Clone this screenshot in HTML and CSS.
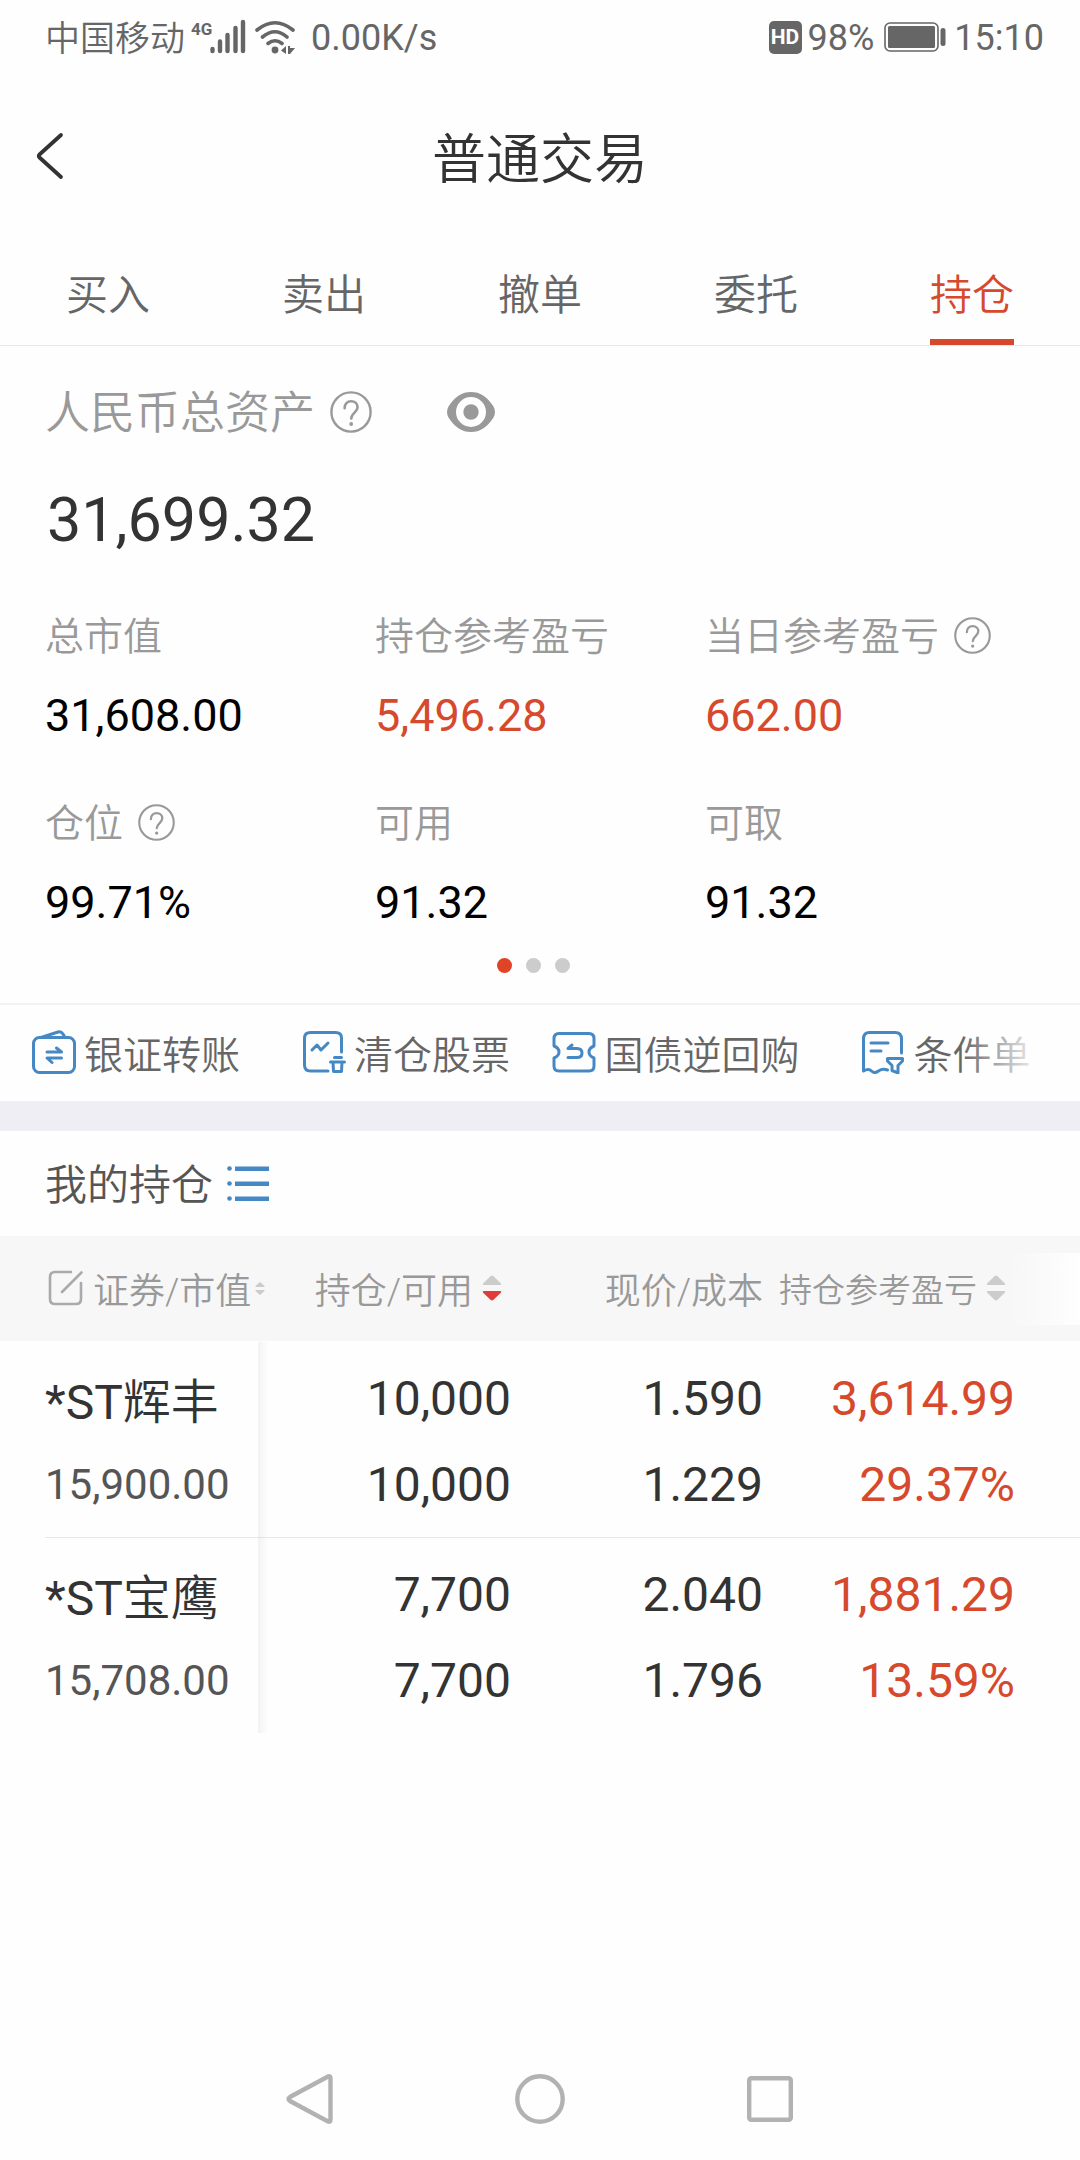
FILE: index.html
```html
<!DOCTYPE html>
<html lang="zh-CN">
<head>
<meta charset="utf-8">
<meta name="viewport" content="width=device-width, initial-scale=1">
<title>普通交易</title>
<link rel="stylesheet" href="styles.css">
</head>
<body>
<svg class="defs" aria-hidden="true">
  <symbol id="help" viewBox="0 0 42 42">
    <circle cx="21" cy="21" r="19.6" fill="none" stroke="currentColor" stroke-width="2.4"/>
    <path d="M14.6 17.2c0-4.200 2.700-6.900 6.500-6.900s6.500 2.400 6.500 6c0 5.200-6.300 5.500-6.300 11.200" fill="none" stroke="currentColor" stroke-width="2.600" stroke-linecap="round"/>
    <circle cx="21.200" cy="33" r="1.900" fill="currentColor"/>
  </symbol>
  <symbol id="sort" viewBox="0 0 20 26">
    <path class="up" d="M8.500 1.200q1.500-1.400 3 0l7.300 7q1.200 1.800-.8 1.800H2Q0 10 1.200 8.200z"/>
    <path class="down" d="M8.500 24.800q1.500 1.400 3 0l7.300-7q1.200-1.800-.8-1.800H2q-2 0-.8 1.800z"/>
  </symbol>
</svg>

<header class="status">
  <div class="status-group">
    <span class="carrier">中国移动</span>
    <svg class="signal" viewBox="0 0 56 36" aria-hidden="true">
      <text x="1" y="16" class="signal-kind">4G</text>
      <path d="M22.500 30v2M30 22.500V32M37.500 16V32M45.500 9V32M53 3V32" stroke="currentColor" stroke-width="4.400" stroke-linecap="round"/>
    </svg>
    <svg class="wifi" viewBox="0 0 40 36" aria-hidden="true">
      <g fill="none" stroke="currentColor" stroke-width="3.600" stroke-linecap="round">
        <path d="M2 11Q20-3.500 38 11M7.500 18Q20 7.500 32 18M13 24.500Q20 19 27 24.500"/>
      </g>
      <circle cx="20" cy="31" r="3.400" fill="currentColor"/>
      <path d="M31 27v8l-5-3.500zM33 27h2v8h-2zM34 29h6l-5 6z" fill="currentColor"/>
    </svg>
    <span class="num speed">0.00K/s</span>
  </div>
  <div class="status-group">
    <span class="hd">HD</span>
    <span class="num">98%</span>
    <svg class="battery" viewBox="0 0 62 30" aria-hidden="true">
      <rect x="1" y="1" width="53" height="28" rx="5" fill="none" stroke="currentColor" stroke-width="1.600"/>
      <rect x="4" y="4" width="47" height="22" rx="1.500" fill="currentColor"/>
      <rect x="56.500" y="6" width="5" height="18" rx="2.500" fill="currentColor"/>
    </svg>
    <span class="num">15:10</span>
  </div>
</header>

<div class="titlebar">
  <button class="back" type="button" aria-label="返回">
    <svg viewBox="0 0 28 48" aria-hidden="true"><path d="M25 3 3.500 22.500q-1.600 1.500 0 3L25 45" fill="none" stroke="currentColor" stroke-width="3.800" stroke-linecap="round" stroke-linejoin="round"/></svg>
  </button>
  <h1>普通交易</h1>
</div>

<nav class="tabs">
  <a href="#buy">买入</a>
  <a href="#sell">卖出</a>
  <a href="#cancel">撤单</a>
  <a href="#orders">委托</a>
  <a href="#positions" class="active" aria-current="page">持仓</a>
</nav>

<main>
  <section class="assets">
    <div class="total-label">
      <span>人民币总资产</span>
      <button class="icon help-lg" type="button" aria-label="说明"><svg><use href="#help"/></svg></button>
      <button class="icon eye" type="button" aria-label="隐藏金额">
        <svg viewBox="0 0 48 40" aria-hidden="true">
          <path fill-rule="evenodd" fill="currentColor" d="M24 0c9 0 16 4.500 22.500 14.500q3 5.500 0 11C40 35.500 33 40 24 40S8 35.500 1.500 25.500q-3-5.500 0-11C8 4.500 15 0 24 0zm0 5a15 15 0 1 0 0 30 15 15 0 0 0 0-30z"/>
          <circle cx="24" cy="20" r="7.700" fill="currentColor"/>
        </svg>
      </button>
    </div>
    <p class="total num">31,699.32</p>
    <dl class="stats">
      <div><dt><span>总市值</span></dt><dd>31,608.00</dd></div>
      <div><dt><span>持仓参考盈亏</span></dt><dd class="gain">5,496.28</dd></div>
      <div><dt><span>当日参考盈亏</span><button class="icon help-sm" type="button" aria-label="说明"><svg><use href="#help"/></svg></button></dt><dd class="gain">662.00</dd></div>
      <div><dt><span>仓位</span><button class="icon help-sm" type="button" aria-label="说明"><svg><use href="#help"/></svg></button></dt><dd>99.71%</dd></div>
      <div><dt><span>可用</span></dt><dd>91.32</dd></div>
      <div><dt><span>可取</span></dt><dd>91.32</dd></div>
    </dl>
    <div class="dots"><i class="on"></i><i></i><i></i></div>
  </section>

  <nav class="shortcuts">
    <a href="#transfer">
      <svg viewBox="0 0 44 44" aria-hidden="true"><rect x="1.500" y="7.500" width="41" height="35" rx="6"/><path d="M9 7.500 26 2q3-1 5 2l2 3.500M15 22h14.500l-5-4M29.500 28H15l5 4.500"/></svg>
      <span>银证转账</span>
    </a>
    <a href="#cleared">
      <svg viewBox="0 0 44 44" aria-hidden="true"><path d="M39.500 22V8q0-5.500-6-5.500h-25Q2.500 2.500 2.500 8v27q0 6 6 6H26M10 20l5-5 4 5 7-7M32.500 27.500h7M28.500 32h14M31 32l.5 9.500h8l.5-9.500"/></svg>
      <span>清仓股票</span>
    </a>
    <a href="#repo">
      <svg viewBox="0 0 44 44" aria-hidden="true"><path d="M7 3.500h30q5 0 5 5V16q-5 2-5 6t5 6v8q0 5-5 5H7q-5 0-5-5v-8q5-2 5-6t-5-6V8.500q0-5 5-5zM20 15l-4 3.500h9q5 0 5 4.500t-5 4.500h-9"/></svg>
      <span>国债逆回购</span>
    </a>
    <a href="#conditional">
      <svg viewBox="0 0 44 44" aria-hidden="true"><path d="M40.500 23V9q0-6.500-6.500-6.500H8.500Q2.500 2.500 2.500 9v32q5-3 8 0t7 0 9-1M10 13h17M10 21h10M26.500 28.500h15V31l-4.500 4.500V43l-6-2.500v-5L26.500 31z"/></svg>
      <span>条件单</span>
    </a>
  </nav>

  <section class="positions">
    <div class="section-title">
      <h2>我的持仓</h2>
      <button class="icon list" type="button" aria-label="列表">
        <svg viewBox="0 0 42 36" aria-hidden="true" fill="currentColor"><circle cx="2.500" cy="2.500" r="2.300"/><circle cx="2.500" cy="17.500" r="2.300"/><circle cx="2.500" cy="32.500" r="2.300"/><path d="M8 .5h34v4.500H8zM8 15.500h34V20H8zM8 30.500h34V35H8z"/></svg>
      </button>
    </div>
    <div class="table-wrap">
      <table>
        <colgroup><col><col class="c"><col class="c"><col class="c"><col class="tail"></colgroup>
        <thead>
          <tr>
            <th class="first"><button type="button"><svg class="edit" viewBox="0 0 36 36" aria-hidden="true"><path d="M23 2H7Q2 2 2 7v22q0 5 5 5h21q5 0 5-5V13M14 22 33.500 2.500"/></svg>证券/市值<svg class="sort tiny"><use href="#sort"/></svg></button></th>
            <th><button type="button">持仓/可用<svg class="sort desc"><use href="#sort"/></svg></button></th>
            <th><button type="button">现价/成本</button></th>
            <th><button type="button" class="small">持仓参考盈亏<svg class="sort"><use href="#sort"/></svg></button></th>
            <th aria-hidden="true"></th>
          </tr>
        </thead>
        <tbody>
          <tr>
            <td class="first"><span class="name">*ST<b>辉丰</b></span><span class="worth">15,900.00</span></td>
            <td><span>10,000</span><span>10,000</span></td>
            <td><span>1.590</span><span>1.229</span></td>
            <td class="gain"><span>3,614.99</span><span>29.37%</span></td>
            <td></td>
          </tr>
          <tr>
            <td class="first"><span class="name">*ST<b>宝鹰</b></span><span class="worth">15,708.00</span></td>
            <td><span>7,700</span><span>7,700</span></td>
            <td><span>2.040</span><span>1.796</span></td>
            <td class="gain"><span>1,881.29</span><span>13.59%</span></td>
            <td></td>
          </tr>
        </tbody>
      </table>
    </div>
  </section>
</main>

<footer class="sysnav">
  <button type="button" aria-label="后退"><svg viewBox="0 0 50 50"><path d="M43 2.500q2.500-1 2.500 2v41q0 3-2.500 2L5 27q-3-2 0-4z"/></svg></button>
  <button type="button" aria-label="主页"><svg viewBox="0 0 50 50"><circle cx="25" cy="25" r="22.700"/></svg></button>
  <button type="button" aria-label="最近任务"><svg viewBox="0 0 50 50"><rect x="4.200" y="4.200" width="41.600" height="41.600" rx="2"/></svg></button>
</footer>
</body>
</html>
```
FILE: styles.css
```css
* { box-sizing: border-box; margin: 0; padding: 0; }

body {
  display: flex;
  flex-direction: column;
  min-height: 100vh;
  background: #fefefe;
  color: #333;
  font-family: Roboto, "Noto Sans CJK SC", sans-serif;
  font-weight: 350;
}

.defs { position: absolute; width: 0; height: 0; }
svg { display: block; flex: none; }
a { color: inherit; text-decoration: none; }
button {
  border: 0;
  background: none;
  color: inherit;
  font: inherit;
  cursor: pointer;
}
.num { font-weight: 400; }
.gain { color: #d6492d; }
.icon svg { width: 100%; height: 100%; }

/* system status bar */
.status {
  display: flex;
  justify-content: space-between;
  align-items: center;
  height: 74px;
  padding: 0 36px 0 45px;
  color: #666;
  font-size: 36px;
  line-height: 42px;
}
.status-group { display: flex; align-items: center; }
.status .num { padding-top: 2px; }
.carrier { padding-top: 5px; font-size: 35px; }
.signal { width: 56px; height: 36px; margin-left: 5px; overflow: visible; }
.signal-kind {
  font-size: 17px;
  font-weight: 700;
  fill: currentColor;
}
.wifi { width: 40px; height: 36px; margin-left: 9px; }
.speed { margin-left: 16px; }
.hd {
  width: 33px;
  height: 33px;
  margin-right: 6px;
  border-radius: 5px;
  background: #666;
  color: #fff;
  font-size: 21px;
  font-weight: 700;
  line-height: 33px;
  text-align: center;
}
.battery { width: 62px; height: 30px; margin: 0 8px 0 10px; }

/* page title */
.titlebar {
  display: grid;
  grid-template-columns: 100px 1fr 100px;
  align-items: center;
  height: 168px;
}
.back { display: flex; padding: 18px 36px 22px; }
.back svg { width: 28px; height: 48px; }
h1 {
  padding-top: 6px;
  font-size: 54px;
  font-weight: 350;
  line-height: 74px;
  text-align: center;
}

/* trade tabs */
.tabs {
  display: grid;
  grid-template-columns: repeat(5, 1fr);
  justify-items: center;
  border-bottom: 1px solid #e8e8e8;
  color: #666;
  font-size: 42px;
  line-height: 86px;
}
.tabs a { padding-top: 11px; border-bottom: 6px solid transparent; }
.tabs .active { border-color: #d5482b; color: #d6492d; }

/* asset overview */
.assets { padding: 36px 45px 30px; color: #999; }
.total-label {
  display: flex;
  align-items: center;
  height: 60px;
  font-size: 45px;
  line-height: 56px;
}
.total-label span, dt span, h2 { padding-top: 4px; }
.help-lg { width: 42px; height: 42px; margin-left: 15px; }
.eye { width: 48px; height: 40px; margin-left: 75px; }
.total {
  margin-top: 38px;
  padding-left: 2px;
  color: #333;
  font-size: 61px;
  line-height: 80px;
}
.stats {
  display: grid;
  grid-template-columns: repeat(3, 1fr);
  row-gap: 51px;
  margin-top: 50px;
}
dt {
  display: flex;
  align-items: center;
  gap: 15px;
  height: 50px;
  font-size: 39px;
  line-height: 46px;
}
dd {
  margin-top: 26px;
  color: #000;
  font-size: 45px;
  font-weight: 400;
  line-height: 60px;
}
dd.gain { color: #d6492d; }
.help-sm { width: 37px; height: 37px; }
.dots {
  display: flex;
  justify-content: center;
  margin-top: 25px;
}
.dots i {
  width: 15px;
  height: 15px;
  margin-right: 14px;
  border-radius: 50%;
  background: #ccc;
}
.dots .on { background: #e04427; }

/* shortcuts, fading out at the right edge */
.shortcuts {
  position: relative;
  display: grid;
  grid-template-columns: repeat(4, 1fr);
  height: 98px;
  padding-bottom: 2px;
  border-top: 2px solid #f3f3f3;
  color: #666;
  font-size: 39px;
}
.shortcuts::after {
  content: "";
  position: absolute;
  inset: 0 0 0 auto;
  width: 120px;
  background: linear-gradient(to right, #fefefe00, #fefefe 70%);
  pointer-events: none;
}
.shortcuts a {
  display: flex;
  align-items: center;
  justify-content: center;
  gap: 8px;
  padding-left: 2px;
}
.shortcuts svg {
  width: 44px;
  height: 44px;
  fill: none;
  stroke: #4688c4;
  stroke-width: 3;
  stroke-linecap: round;
  stroke-linejoin: round;
}

/* positions */
.positions { border-top: 30px solid #eeeef4; }
.section-title {
  display: flex;
  align-items: center;
  gap: 14px;
  height: 105px;
  padding: 0 45px;
}
h2 { color: #555; font-size: 42px; font-weight: 350; line-height: 60px; }
.list { width: 42px; height: 36px; color: #4688c4; }

.table-wrap { position: relative; }
.table-wrap::before {
  content: "";
  position: absolute;
  top: 106px;
  right: 812px;
  bottom: 0;
  width: 10px;
  background: linear-gradient(to right, #0000000c, #00000000);
}
.table-wrap::after {
  content: "";
  position: absolute;
  top: 17px;
  right: 0;
  width: 72px;
  height: 72px;
  background: linear-gradient(to right, #fefefe00, #fefefe);
}
table { width: 100%; border-collapse: collapse; table-layout: fixed; }
.c { width: 252px; }
.tail { width: 65px; }
thead { background: #f7f7f7; }
th {
  height: 105px;
  padding-bottom: 1px;
  color: #999;
  font-size: 36px;
  font-weight: 350;
  white-space: nowrap;
}
th button { display: flex; align-items: center; justify-content: flex-end; width: 100%; }
th .small { font-size: 33px; }
.edit {
  width: 36px;
  height: 36px;
  margin-right: 9px;
  fill: none;
  stroke: #aaa;
  stroke-width: 2.600;
  stroke-linecap: round;
}
.sort { width: 20px; height: 26px; margin: 0 9px; fill: #ccc; }
.sort.tiny { width: 10px; height: 13px; margin: 0 0 0 4px; }
.sort.desc { --down: #e03a3a; }
.down { fill: var(--down, #ccc); }
td {
  height: 196px;
  padding: 15px 0 8px;
  text-align: right;
  vertical-align: top;
}
td span {
  display: block;
  font-size: 48px;
  font-weight: 400;
  line-height: 86px;
}
tbody tr + tr { background: linear-gradient(#e8e8e8, #e8e8e8) right top / calc(100% - 45px) 1px no-repeat; }
.first { padding-left: 48px; text-align: left; }
.first button { justify-content: flex-start; }
td.first { padding-left: 45px; }
td .name { line-height: 94px; }
.name b { font-weight: 350; }
td .worth { color: #555; font-size: 42px; line-height: 70px; }

/* system navigation */
.sysnav {
  display: flex;
  justify-content: center;
  gap: 180px;
  margin-top: auto;
  padding: 36px 0;
}
.sysnav svg { width: 50px; height: 50px; fill: none; stroke: #b2b2b2; stroke-width: 4.400; }
```
